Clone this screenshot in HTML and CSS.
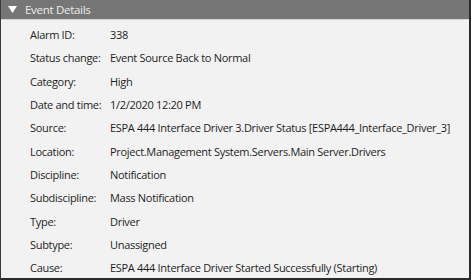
FILE: index.html
```html
<!DOCTYPE html>
<html lang="en">
  <head>
    <meta charset="UTF-8" />
    <meta name="viewport" content="width=device-width, initial-scale=1.0" />
    <title>Event Details</title>
    <link rel="stylesheet" href="styles.css">
  </head>
  <body>
    <div class="panel">
      <!-- Header bar -->
      <div class="panel-header">
        <svg class="caret" width="9" height="7" viewBox="0 0 9 7"><path d="M0 0H9L4.5 7Z" fill="#ffffff"/></svg>
        <span class="panel-title">Event Details</span>
      </div>

      <!-- Detail rows -->
      <div class="details">
        <div class="row"><span class="label">Alarm ID:</span><span class="value">338</span></div>
        <div class="row"><span class="label">Status change:</span><span class="value">Event Source Back to Normal</span></div>
        <div class="row"><span class="label">Category:</span><span class="value">High</span></div>
        <div class="row"><span class="label">Date and time:</span><span class="value">1/2/2020 12:20 PM</span></div>
        <div class="row"><span class="label">Source:</span><span class="value">ESPA 444 Interface Driver 3.Driver Status [ESPA444_Interface_Driver_3]</span></div>
        <div class="row"><span class="label">Location:</span><span class="value">Project.Management System.Servers.Main Server.Drivers</span></div>
        <div class="row"><span class="label">Discipline:</span><span class="value">Notification</span></div>
        <div class="row"><span class="label">Subdiscipline:</span><span class="value">Mass Notification</span></div>
        <div class="row"><span class="label">Type:</span><span class="value">Driver</span></div>
        <div class="row"><span class="label">Subtype:</span><span class="value">Unassigned</span></div>
        <div class="row"><span class="label">Cause:</span><span class="value">ESPA 444 Interface Driver Started Successfully (Starting)</span></div>
      </div>
    </div>
  </body>
</html>
```

FILE: styles.css
```css
body {
  margin: 0;
  font-family: "Open Sans", "Noto Sans", sans-serif;
  font-size: 11px;
  letter-spacing: -0.3px;
  background-color: #f2f2f2;
}
.panel {
  width: 471px;
  height: 280px;
  box-sizing: border-box;
  border-left: 1px solid #3a3a3a;
  border-right: 2px solid #2a2a2a;
  border-bottom: 2px solid #2a2a2a;
  background-color: #f2f2f2;
  overflow: hidden;
}
.panel-header {
  display: flex;
  align-items: center;
  height: 19px;
  background-color: #767676;
  border-bottom: 1px solid #d4d4d4;
  color: #ececec;
}
.caret {
  margin-left: 7px;
  margin-right: 8px;
}
.panel-title {
  font-size: 11.5px;
}
.details {
  padding: 3px 0 0 29px;
}
.row {
  display: flex;
  height: 23.3px;
  align-items: center;
  color: #1e1e1e;
  white-space: nowrap;
}
.label {
  width: 80px;
}
```
